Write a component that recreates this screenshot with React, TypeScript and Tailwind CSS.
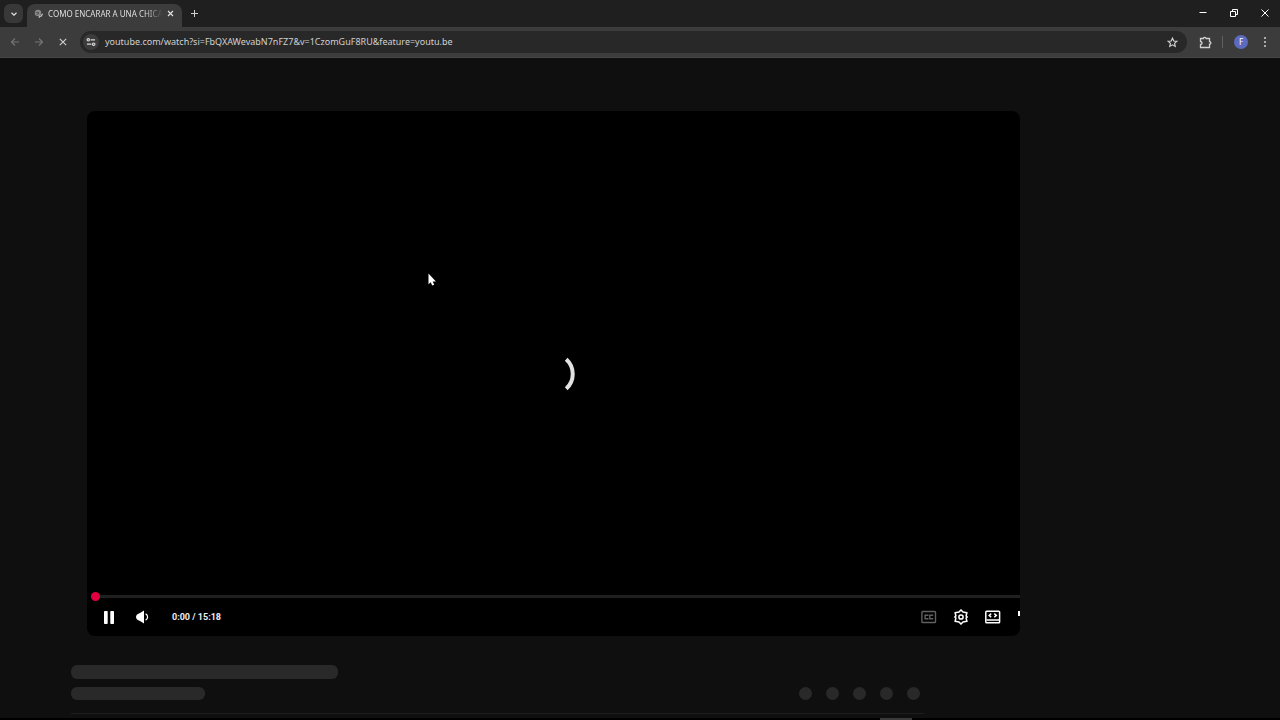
import React from 'react'

const TabStrip = () => {
  return (
    <div className="flex h-[27px] items-end bg-[#1f1f1f] pl-1">
      <button
        aria-label="Search tabs"
        className="mb-1 flex h-[19px] w-[19px] items-center justify-center rounded-md bg-[#383838] text-[#e3e3e3]"
      >
        <svg width="8" height="8" viewBox="0 0 8 8" fill="none" stroke="currentColor" strokeWidth="1.2">
          <path d="M1.5 2.8 4 5.2l2.5-2.4" />
        </svg>
      </button>

      {/* Active tab */}
      <div className="ml-1 flex h-[23px] w-[155px] items-center rounded-t-lg bg-[#3c3c3c] pb-1 pl-[7px] text-[#e3e3e3]">
        <svg className="shrink-0" width="10" height="10" viewBox="0 0 10 10" fill="none">
          <circle cx="4" cy="4" r="3.2" fill="#8a8a8a" />
          <path d="M2 3.5c1.5-.8 1.8.8 3 .2M2.6 5.8 5 4" stroke="#3c3c3c" strokeWidth=".8" />
          <path d="M4.8 8.6 6.2 7M6.8 7.6l1.800-2.800" stroke="#c8c8c8" strokeWidth="1.2" />
        </svg>
        <span className="ml-1 w-[115px] overflow-hidden whitespace-nowrap bg-linear-to-r from-[#ececec] from-85% to-[#3c3c3c] bg-clip-text text-[8px] leading-3 text-transparent">
          COMO ENCARAR A UNA CHICA
        </span>
        <button aria-label="Close tab" className="ml-px flex h-3 w-3 items-center justify-center">
          <svg width="7" height="7" viewBox="0 0 7 7" stroke="currentColor" strokeWidth="1.1">
            <path d="m1 1 5 5M6 1 1 6" />
          </svg>
        </button>
      </div>

      <button aria-label="New tab" className="mb-2 ml-[6px] flex h-3 w-3 items-center justify-center text-[#d0d0d0]">
        <svg width="9" height="9" viewBox="0 0 9 9" stroke="currentColor" strokeWidth="1">
          <path d="M4.5 1v7M1 4.5h7" />
        </svg>
      </button>

      {/* Window controls */}
      <div className="mb-2 ml-auto mr-[7px] flex gap-[15px] text-white">
        <button aria-label="Minimize" className="flex h-3 w-4 items-center justify-center">
          <svg width="8" height="8" viewBox="0 0 8 8" stroke="currentColor">
            <path d="M.5 3.5h7" />
          </svg>
        </button>
        <button aria-label="Restore" className="flex h-3 w-4 items-center justify-center">
          <svg width="8" height="8" viewBox="0 0 8 8" fill="none" stroke="currentColor">
            <path d="M.5 2.5h5v5h-5zM2.5 2V.5h5v5H6" />
          </svg>
        </button>
        <button aria-label="Close" className="flex h-3 w-4 items-center justify-center">
          <svg width="8" height="8" viewBox="0 0 8 8" stroke="currentColor">
            <path d="m.5.5 7 7M7.5.5l-7 7" />
          </svg>
        </button>
      </div>
    </div>
  )
}

const Toolbar = () => {
  return (
    <div className="flex h-[31px] items-center border-b border-[#464646] bg-[#3c3c3c] px-2">
      <div className="flex gap-3 pl-px">
        <button aria-label="Back" className="flex h-3 w-3 items-center justify-center text-[#757575]">
          <svg width="10" height="10" viewBox="0 0 10 10" fill="none" stroke="currentColor" strokeWidth="1.1">
            <path d="M9 5H1.5M5 1.5 1.5 5 5 8.5" />
          </svg>
        </button>
        <button aria-label="Forward" className="flex h-3 w-3 items-center justify-center text-[#757575]">
          <svg width="10" height="10" viewBox="0 0 10 10" fill="none" stroke="currentColor" strokeWidth="1.1">
            <path d="M1 5h7.5M5 1.5 8.5 5 5 8.5" />
          </svg>
        </button>
        <button aria-label="Stop" className="flex h-3 w-3 items-center justify-center text-[#d0d0d0]">
          <svg width="8" height="8" viewBox="0 0 8 8" stroke="currentColor" strokeWidth="1.1">
            <path d="m.8.8 6.4 6.4M7.2.8.8 7.2" />
          </svg>
        </button>
      </div>

      {/* Address bar */}
      <div className="ml-[11px] flex h-[22px] min-w-0 flex-1 items-center rounded-full bg-[#282828] pl-[3px] pr-[9px]">
        <button
          aria-label="Site information"
          className="flex h-4 w-4 shrink-0 items-center justify-center rounded-full bg-[#3c3c3c] text-[#d8d8d8]"
        >
          <svg width="10" height="10" viewBox="0 0 10 10" fill="none" stroke="currentColor" strokeWidth="1.2">
            <circle cx="2.3" cy="2.8" r="1.2" />
            <path d="M4.6 2.8H9M1 7.2h4.4" />
            <circle cx="7.7" cy="7.2" r="1.2" />
          </svg>
        </button>
        <input
          type="text"
          aria-label="Address"
          readOnly
          value="youtube.com/watch?si=FbQXAWevabN7nFZ7&v=1CzomGuF8RU&feature=youtu.be"
          className="ml-[6px] min-w-0 flex-1 bg-transparent text-[9px] leading-4 text-[#d0d0d0] outline-none"
        />
        <button aria-label="Bookmark" className="flex h-3 w-3 items-center justify-center text-[#d0d0d0]">
          <svg width="11" height="11" viewBox="0 0 24 24" fill="none" stroke="currentColor" strokeWidth="2.6">
            <path d="m12 2.5 2.8 6.2 6.7.7-5 4.5 1.4 6.600L12 17.1l-5.900 3.400 1.400-6.600-5-4.500 6.700-.7z" />
          </svg>
        </button>
      </div>

      <button aria-label="Extensions" className="ml-[11px] flex h-[14px] w-[14px] items-center justify-center text-[#d0d0d0]">
        <svg width="13" height="13" viewBox="0 0 13 13" fill="none" stroke="currentColor" strokeWidth="1.3">
          <path d="M1.5 2.5h3c0-1.600 2.600-1.600 2.600 0h3.400v3.200c1.800 0 1.800 2.400 0 2.400v3.400h-9V8.500c2 0 2-3 0-3z" />
        </svg>
      </button>
      <div className="ml-[10px] h-3 w-px bg-[#606060]" />
      <button
        aria-label="Profile"
        className="ml-[11px] flex h-[14px] w-[14px] items-center justify-center rounded-full bg-[#5c6bc0] text-[8px] leading-none text-white"
      >
        F
      </button>
      <button aria-label="Menu" className="ml-[10px] flex h-[14px] w-[14px] items-center justify-center text-[#d0d0d0]">
        <svg width="4" height="12" viewBox="0 0 4 12" fill="currentColor">
          <circle cx="2" cy="2" r="1" />
          <circle cx="2" cy="6" r="1" />
          <circle cx="2" cy="10" r="1" />
        </svg>
      </button>
    </div>
  )
}

const Player = () => {
  return (
    <section
      aria-label="Video player"
      className="relative ml-[87px] mr-[260px] mt-[53px] flex aspect-video flex-col justify-end overflow-hidden rounded-lg bg-black"
    >
      {/* Loading spinner */}
      <div className="absolute inset-0 flex items-center justify-center">
        <svg width="44" height="44" viewBox="0 0 44 44" fill="none">
          <path d="M34.200 8.200a20 20 0 0 1 0 29.600" stroke="#e2e2e2" strokeWidth="4" />
        </svg>
      </div>

      {/* Progress bar */}
      <div className="relative ml-2 h-[3px] bg-[#202020]">
        <div className="absolute -left-1 -top-[3px] h-[9px] w-[9px] rounded-full bg-[#e1003f]" />
      </div>

      <div className="relative flex h-[38px] items-center pl-[17px] pt-px text-white">
        <button aria-label="Pause" className="flex h-4 w-[10px] items-center justify-center">
          <svg width="10" height="13" viewBox="0 0 10 13" fill="currentColor">
            <rect width="3.7" height="13" rx=".8" />
            <rect x="6.3" width="3.7" height="13" rx=".8" />
          </svg>
        </button>
        <button aria-label="Mute" className="ml-[21px] flex h-4 w-[14px] items-center justify-center">
          <svg width="14" height="14" viewBox="0 0 14 14">
            <path d="M9 .5v13L5 11C2.500 10.300 1 9 1 7s1.500-3.300 4-4z" fill="currentColor" />
            <path d="M10.600 3.900c2.700 1.100 2.700 5.100 0 6.200" fill="none" stroke="currentColor" strokeWidth="1.200" />
          </svg>
        </button>
        <span className="ml-[23px] font-['Roboto',sans-serif] text-[9px] font-bold leading-4 text-[#eeeeee]">
          0:00 / 15:18
        </span>

        <div className="ml-auto flex items-center gap-4">
          <button aria-label="Subtitles" className="flex h-4 w-4 items-center justify-center text-[#606060]">
            <svg width="16" height="14" viewBox="0 0 16 14" fill="none" stroke="currentColor" strokeWidth="1.4">
              <rect x=".9" y="1.5" width="13.600" height="11" rx=".8" />
              <path d="M6.800 5.900V5.200H4.100v3.600h2.700v-.7M11.500 5.900V5.200H8.800v3.600h2.700v-.7" strokeWidth="1.400" />
            </svg>
          </button>
          <button aria-label="Settings" className="flex h-4 w-4 items-center justify-center">
            <svg width="16" height="16" viewBox="0 0 16 16" fill="none" stroke="currentColor" strokeWidth="1.500" strokeLinejoin="round">
              <path d="M8 .9 10 3l3.900.7L13.100 6.900 14.200 8l-1.100 1.100.8 3.200L10 13l-2 2.100L6 13l-3.900-.7.8-3.200L1.800 8l1.100-1.100-.8-3.200L6 3z" />
              <circle cx="8" cy="8" r="2.100" />
            </svg>
          </button>
          <button aria-label="Theater mode" className="flex h-4 w-4 items-center justify-center">
            <svg width="16" height="14" viewBox="0 0 16 14" fill="none" stroke="currentColor" strokeWidth="1.500">
              <rect x=".8" y="1.200" width="13.800" height="11.600" rx=".8" />
              <path d="M1.500 10h13M6.200 3.600 4.200 5.400l2 1.800M9.300 3.600l2 1.800-2 1.800" />
            </svg>
          </button>
          <button aria-label="Full screen" className="flex h-4 w-[3px] items-start overflow-hidden">
            <svg className="shrink-0" width="16" height="16" viewBox="0 0 16 16" fill="none" stroke="currentColor" strokeWidth="2">
              <path d="M1 3h5M2 2v5" />
            </svg>
          </button>
        </div>
      </div>
    </section>
  )
}

const Skeleton = () => {
  return (
    <div className="ml-[71px] mr-[356px] mt-[29px] border-b border-[#1d1d1d] pb-[13px]">
      <div className="h-[14px] w-[267px] rounded-md bg-[#292929]" />
      <div className="mt-2 flex items-center justify-between pr-1">
        <div className="h-[13px] w-[134px] rounded-md bg-[#292929]" />
        <div className="flex gap-[14px]">
          {[1, 2, 3, 4, 5].map((item) => (
            <div key={item} className="h-[13px] w-[13px] rounded-full bg-[#292929]" />
          ))}
        </div>
      </div>
    </div>
  )
}

const App = () => {
  return (
    <div className="relative flex min-h-screen flex-col bg-[#0f0f0f] font-['Noto_Sans',sans-serif]">
      <header>
        <TabStrip />
        <Toolbar />
      </header>
      <main className="flex-1">
        <Player />
        <Skeleton />
      </main>
      <footer className="flex h-[2px] justify-end bg-black pr-[368px]">
        <div className="h-[2px] w-8 bg-[#3a3a3a]" />
      </footer>

      {/* Mouse pointer */}
      <svg className="absolute left-[428px] top-[273px]" width="8" height="13" viewBox="0 0 8 13" fill="#ffffff">
        <path d="M.5.5v10.800l2.200-2.100 1.500 3.300 2-.8-1.500-3.300h3.200z" />
      </svg>
    </div>
  )
}

export default App
